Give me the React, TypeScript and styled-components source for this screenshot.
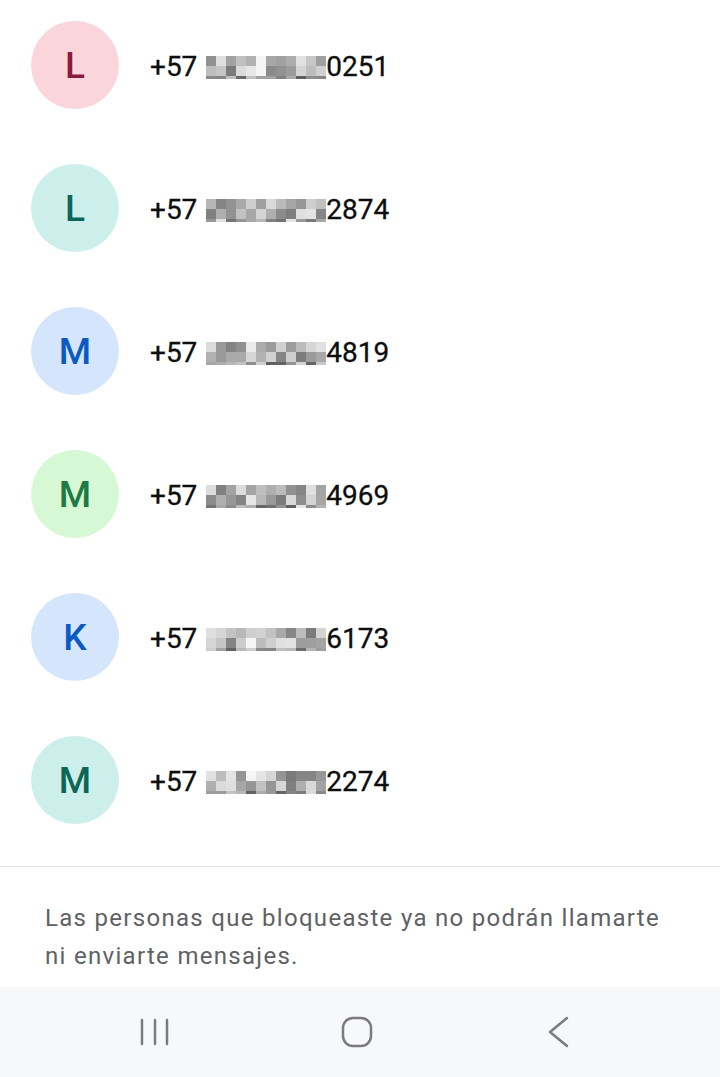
import React from "react";
import styled, { createGlobalStyle } from "styled-components";

const Global = createGlobalStyle`
  html, body { margin: 0; padding: 0; background: #ffffff; }
  body { font-family: Roboto, "Noto Sans", sans-serif; -webkit-font-smoothing: antialiased; }
`;

const Page = styled.div`
  width: 720px;
  height: 1077px;
  display: flex;
  flex-direction: column;
  background: #ffffff;
  overflow: hidden;
`;

const List = styled.div`
  display: flex;
  flex-direction: column;
  gap: 55px;
  padding: 21px 0 0 31px;
`;

const Row = styled.div`
  display: flex;
  align-items: center;
  gap: 31px;
  height: 88px;
`;

const Avatar = styled.div<{ $bg: string; $fg: string }>`
  width: 88px;
  height: 88px;
  border-radius: 50%;
  background: ${(p) => p.$bg};
  color: ${(p) => p.$fg};
  display: flex;
  align-items: center;
  justify-content: center;
  font-size: 37px;
  font-weight: 500;
`;

const Number = styled.div`
  display: flex;
  align-items: center;
  font-size: 28px;
  color: #0e0e0e;
  margin-top: 2px;
  -webkit-text-stroke: 0.3px #0e0e0e;
`;

const Mosaic = styled.div`
  display: grid;
  grid-template-columns: repeat(12, 10px);
  grid-template-rows: 10px 10px 3px;
  margin: 2px 0 0 9px;
`;

const Cell = styled.div<{ $c: string }>`
  background: ${(p) => p.$c};
`;

const Divider = styled.div`
  height: 1px;
  background: #e6e6e6;
  margin-top: 42px;
`;

const Note = styled.p`
  margin: 0;
  padding: 32px 52px 0 45px;
  height: 120px;
  box-sizing: border-box;
  font-family: "Roboto", sans-serif;
  font-size: 24px;
  line-height: 38px;
  color: #5f6165;
  letter-spacing: 1.3px;
`;

const NavBar = styled.div`
  flex: 1;
  background: #f7f8fa;
  display: grid;
  grid-template-columns: 1fr 1fr 1fr;
  align-items: center;
  justify-items: center;
  padding: 0 60px 0 54px;
`;

const NavIcon = styled.svg`
  display: block;
`;

const contacts = [
  { l: "L", bg: "#fad6dc", fg: "#8b1a3c", tail: "0251", seed: 3 },
  { l: "L", bg: "#cdefeb", fg: "#0d6656", tail: "2874", seed: 7 },
  { l: "M", bg: "#d5e6fc", fg: "#0b5ac2", tail: "4819", seed: 11 },
  { l: "M", bg: "#d7f8d5", fg: "#1d7a45", tail: "4969", seed: 17 },
  { l: "K", bg: "#d5e6fc", fg: "#0b5ac2", tail: "6173", seed: 23 },
  { l: "M", bg: "#cdefeb", fg: "#0d6656", tail: "2274", seed: 29 },
];

function shades(seed: number): string[] {
  const out: string[] = [];
  let s = seed * 9301 + 49297;
  for (let i = 0; i < 36; i++) {
    s = (s * 9301 + 49297) % 233280;
    const r = s / 233280;
    const col = i % 12;
    let v = Math.round(120 + r * 110);
    if (col === 4 || col === 5) v = Math.min(245, v + 30);
    if (i >= 24) v = Math.round(90 + r * 140);
    out.push(`rgb(${v},${v},${v})`);
  }
  return out;
}

export default function App() {
  return (
    <Page>
      <Global />
      <List>
        {contacts.map((c, i) => (
          <Row key={i}>
            <Avatar $bg={c.bg} $fg={c.fg}>{c.l}</Avatar>
            <Number>
              +57
              <Mosaic>
                {shades(c.seed).map((col, j) => (
                  <Cell key={j} $c={col} />
                ))}
              </Mosaic>
              {c.tail}
            </Number>
          </Row>
        ))}
      </List>
      <Divider />
      <Note>Las personas que bloqueaste ya no podrán llamarte ni enviarte mensajes.</Note>
      <NavBar>
        <NavIcon width="30" height="30" viewBox="0 0 30 30">
          <g stroke="#7b7b7b" strokeWidth="2.5" strokeLinecap="round">
            <line x1="2" y1="3" x2="2" y2="27" />
            <line x1="15" y1="3" x2="15" y2="27" />
            <line x1="27" y1="3" x2="27" y2="27" />
          </g>
        </NavIcon>
        <NavIcon width="32" height="32" viewBox="0 0 32 32">
          <rect x="2" y="2" width="28" height="28" rx="10" fill="none" stroke="#7b7b7b" strokeWidth="2.5" />
        </NavIcon>
        <NavIcon width="24" height="32" viewBox="0 0 24 32">
          <polyline points="20,2 3,16 20,30" fill="none" stroke="#7b7b7b" strokeWidth="2.5" strokeLinecap="round" strokeLinejoin="round" />
        </NavIcon>
      </NavBar>
    </Page>
  );
}
